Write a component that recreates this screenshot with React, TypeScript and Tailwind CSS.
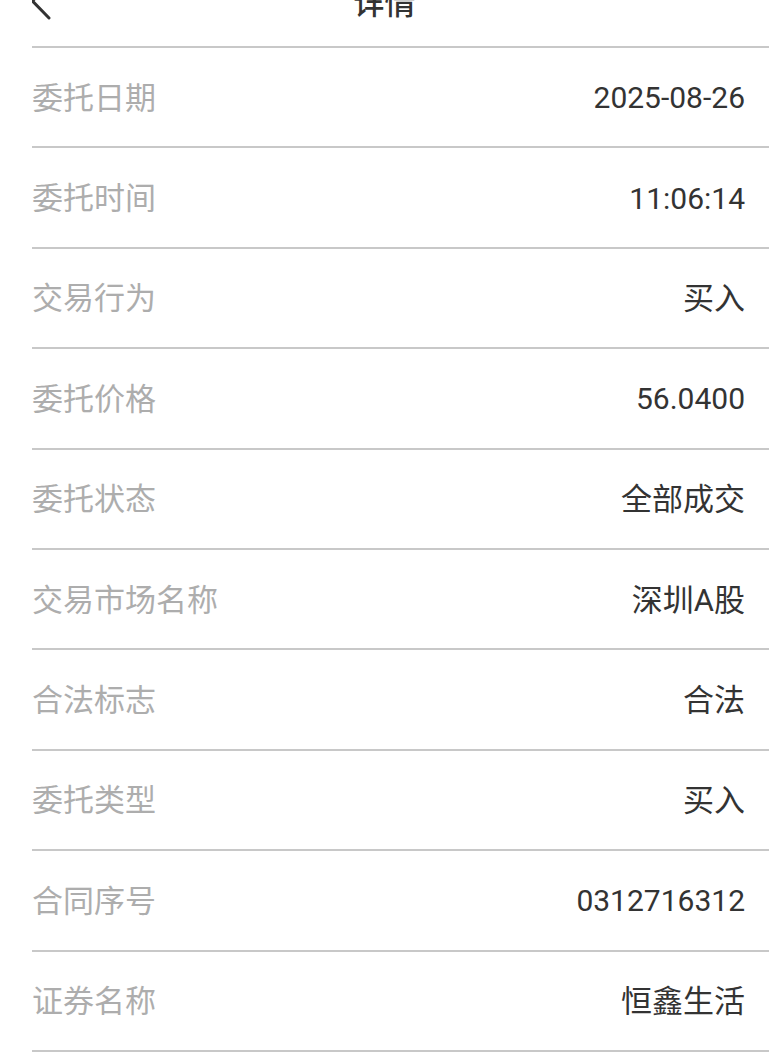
import React from 'react';

const rows: [string, string][] = [
  ['委托日期', '2025-08-26'],
  ['委托时间', '11:06:14'],
  ['交易行为', '买入'],
  ['委托价格', '56.0400'],
  ['委托状态', '全部成交'],
  ['交易市场名称', '深圳A股'],
  ['合法标志', '合法'],
  ['委托类型', '买入'],
  ['合同序号', '0312716312'],
  ['证券名称', '恒鑫生活'],
];

const isNumeric = (v: string) => /^[0-9.:\-]+$/.test(v);

const App: React.FC = () => {
  return (
    <div
      className="w-full min-h-screen bg-white overflow-hidden"
      style={{ fontFamily: 'Roboto, "Noto Sans CJK SC", sans-serif' }}
    >
      {/* Header (scrolled partly off the top) */}
      <div className="ml-[32px] h-[48px] border-b-2 border-[#c8c8c8] flex items-start overflow-hidden">
        <div className="w-[40px] -mt-[18px]">
          <svg width="24" height="38" viewBox="0 0 24 38" fill="none">
            <path d="M17 2 L0.5 19 L17 36" stroke="#333" strokeWidth="3" strokeLinecap="round" strokeLinejoin="round" />
          </svg>
        </div>
        <div className="flex-1 flex justify-center pr-[72px] -mt-[12px]">
          <span className="text-[31px] leading-[31px] font-medium text-[#333]">详情</span>
        </div>
      </div>

      {/* Rows */}
      <div className="ml-[32px]">
        {rows.map(([label, value], i) => (
          <div
            key={i}
            className="h-[100.4px] border-b-2 border-[#c8c8c8] flex items-center justify-between pr-[24px]"
          >
            <span className="text-[31px] leading-none text-[#adadad] pt-[2px]">{label}</span>
            <span
              className={
                isNumeric(value)
                  ? 'text-[30px] leading-none text-[#333] pt-[2px]'
                  : 'text-[31px] leading-none text-[#333] pt-[2px]'
              }
            >
              {value}
            </span>
          </div>
        ))}
      </div>
    </div>
  );
};

export default App;
